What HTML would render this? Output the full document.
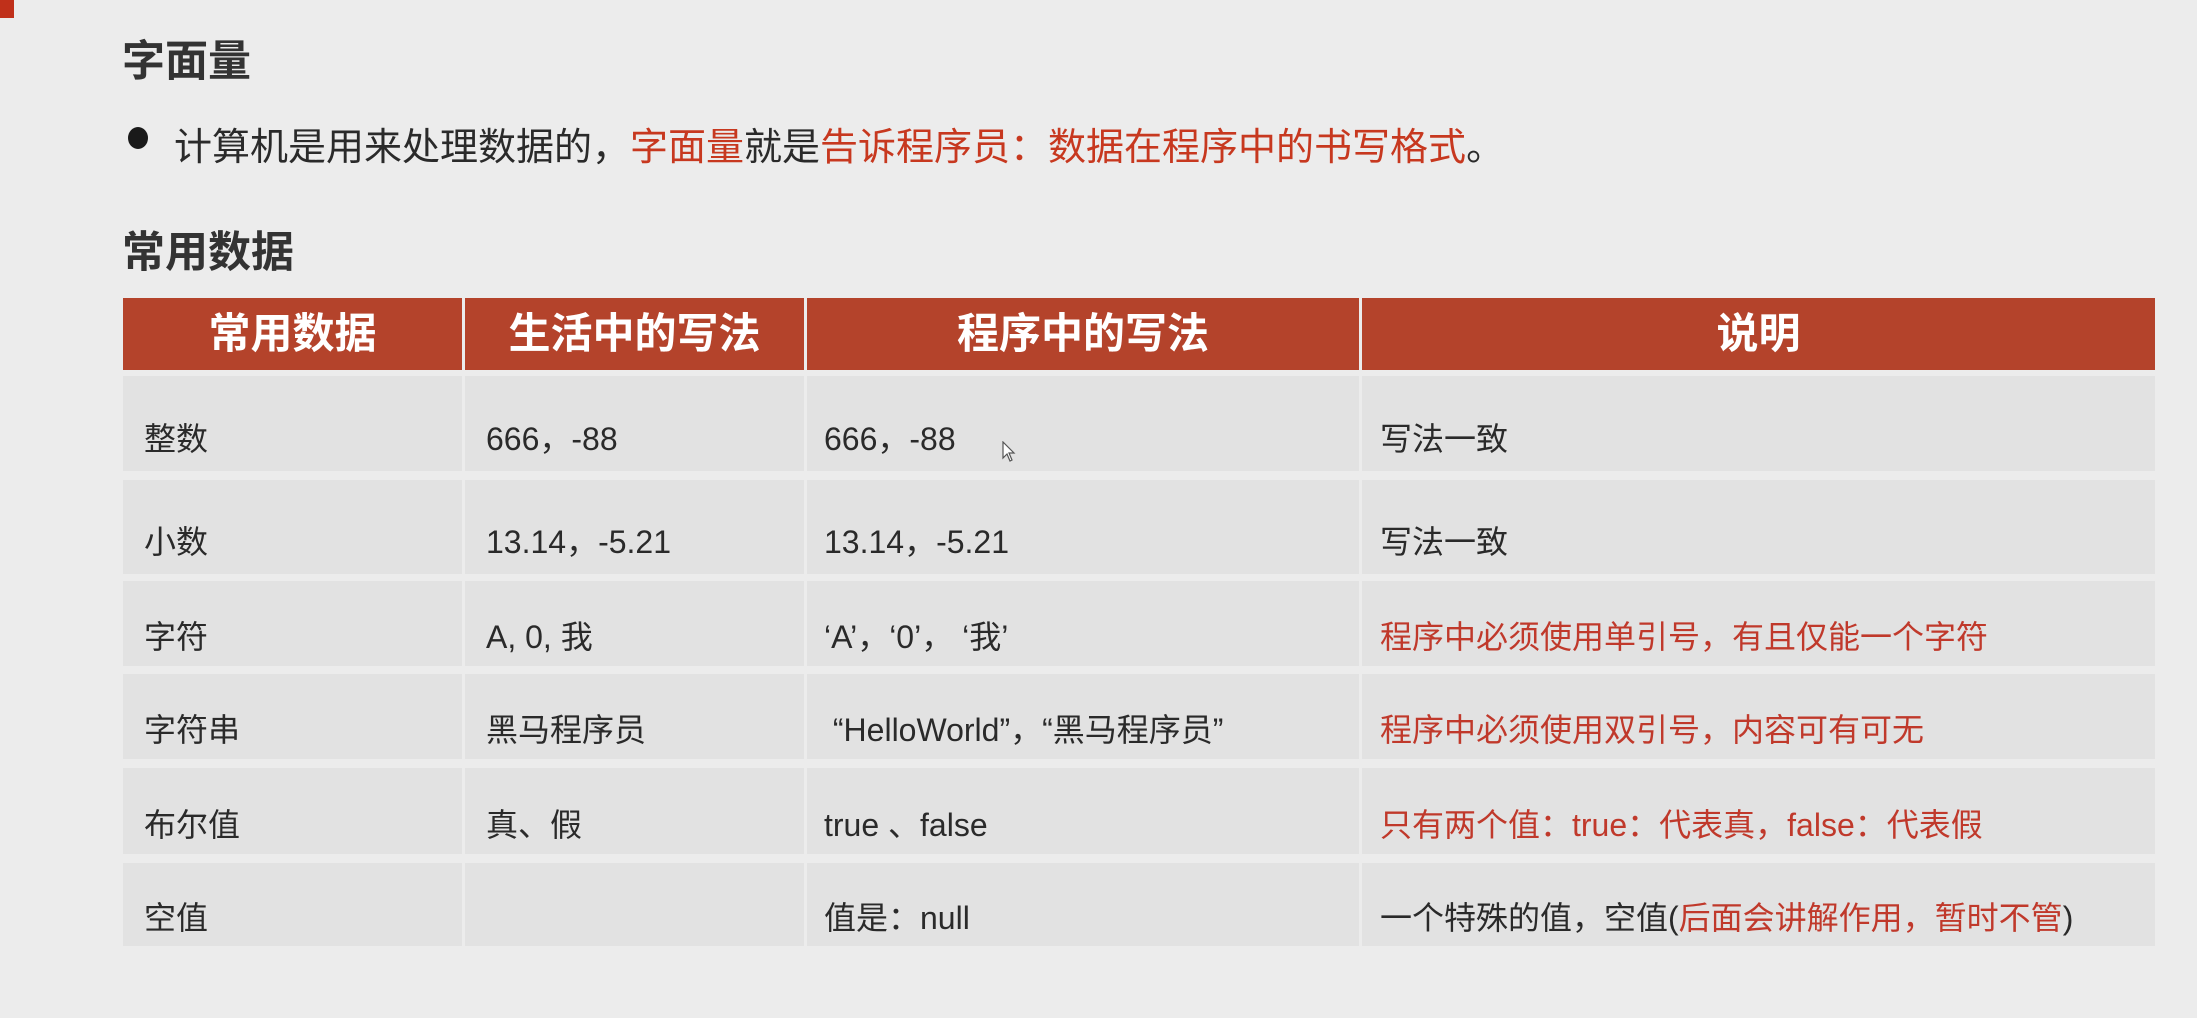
<!DOCTYPE html>
<html><head><meta charset="utf-8"><style>
html,body{margin:0;padding:0}
body{width:2197px;height:1018px;background:#ececec;position:relative;overflow:hidden;font-family:"Liberation Sans","Noto Sans CJK SC",sans-serif;color:#2a2a2a}
.a{position:absolute;white-space:nowrap}
.h{font-weight:bold;font-size:43px;color:#333}
.r{color:#c7381f}
.hd{position:absolute;top:298px;height:72px;background:#b4432b;color:#fff;font-weight:bold;font-size:42px;line-height:72px;text-align:center}
.c{position:absolute;background:#e2e2e2;font-size:32px;box-sizing:border-box}
.c .t{position:absolute;white-space:nowrap;line-height:40px}
.dr{color:#c0392b}
</style></head><body>
<div class="a" style="left:0;top:0;width:14px;height:18px;background:#c0301a"></div>
<div class="a h" style="left:122px;top:27px;">字面量</div>
<div class="a" style="left:128px;top:127px;width:20px;height:22px;border-radius:50%;background:#1a1a1a"></div>
<div class="a" style="left:174px;top:116px;font-size:38px;">计算机是用来处理数据的，<span class="r">字面量</span>就是<span class="r">告诉程序员：数据在程序中的书写格式</span>。</div>
<div class="a h" style="left:122px;top:218px;">常用数据</div>

<div class="hd" style="left:123px;width:339px">常用数据</div>
<div class="hd" style="left:465px;width:339px">生活中的写法</div>
<div class="hd" style="left:807px;width:552px">程序中的写法</div>
<div class="hd" style="left:1362px;width:793px">说明</div>

<div id="t"></div>
<script>
var rowsY=[[376,471],[480,574],[581,666],[674,759],[768,854],[863,946]];
var colsX=[[123,462,21],[465,804,21],[807,1359,17],[1362,2155,18]];
var data=[
["整数","666，-88","666，-88","写法一致"],
["小数","13.14，-5.21","13.14，-5.21","写法一致"],
["字符","A, 0, 我","‘A’，‘0’， ‘我’","<span class='dr'>程序中必须使用单引号，有且仅能一个字符</span>"],
["字符串","黑马程序员","&nbsp;“HelloWorld”，“黑马程序员”","<span class='dr'>程序中必须使用双引号，内容可有可无</span>"],
["布尔值","真、假","true 、false","<span class='dr'>只有两个值：true：代表真，false：代表假</span>"],
["空值","","值是：null","一个特殊的值，空值(<span class='dr'>后面会讲解作用，暂时不管</span>)"]];
var out="";
for(var i=0;i<6;i++)for(var j=0;j<4;j++){
var rr=rowsY[i],cc=colsX[j],ty=rr[0],hh=rr[1]-rr[0];
out+='<div class="c" style="left:'+cc[0]+'px;top:'+ty+'px;width:'+(cc[1]-cc[0])+'px;height:'+hh+'px"><div class="t" style="left:'+cc[2]+'px;top:'+Math.round(hh*0.66-20)+'px">'+data[i][j]+'</div></div>';}
document.getElementById('t').innerHTML=out;
</script>
<svg class="a" style="left:1002px;top:441px" width="14" height="22" viewBox="0 0 14 22"><path d="M1 1 L1 17 L5 13 L8 20 L10 19 L7 12 L12 12 Z" fill="#fff" stroke="#555" stroke-width="1.2"/></svg>
</body></html>
